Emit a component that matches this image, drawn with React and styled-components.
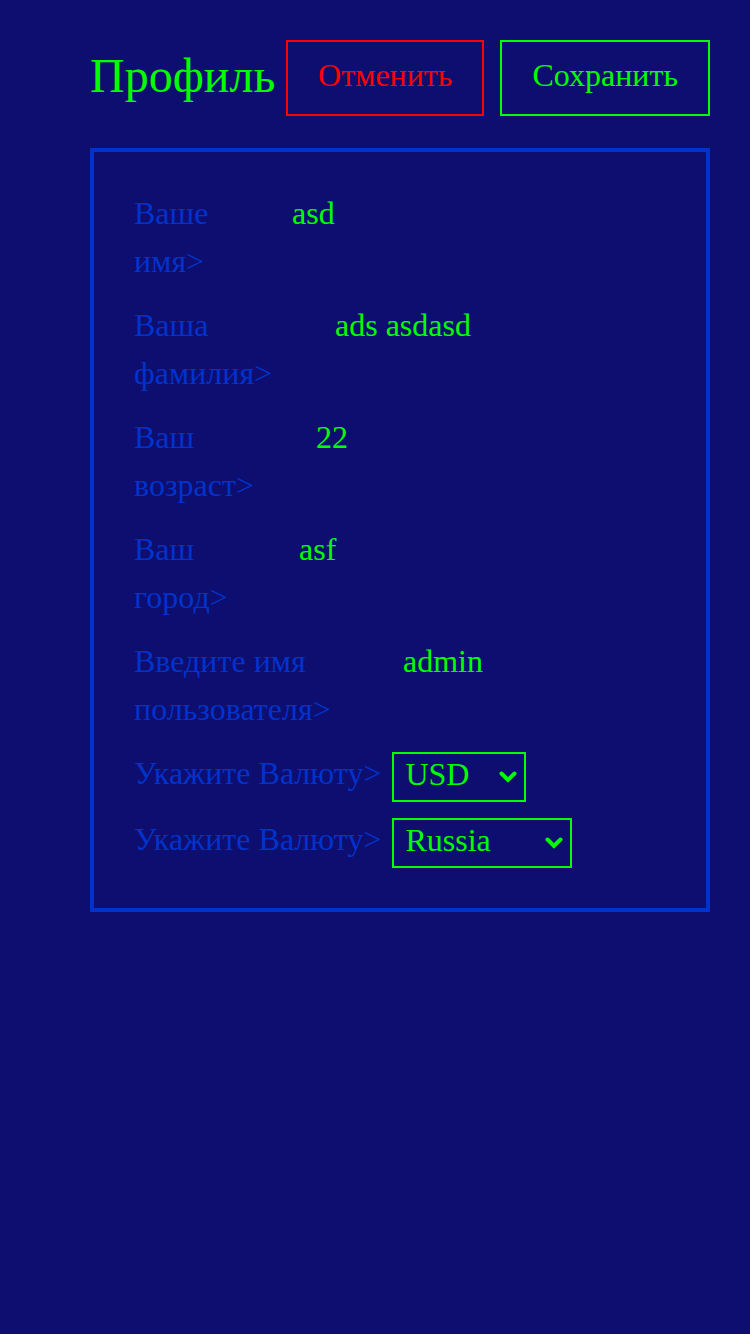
import styled, { createGlobalStyle } from 'styled-components';

const GlobalStyle = createGlobalStyle`
  html, body {
    margin: 0;
    padding: 0;
    background: #0d0e6f;
  }
  body {
    font-family: "Liberation Serif", "Times New Roman", serif;
    min-height: 1334px;
  }
`;

const Page = styled.div`
  padding: 40px 40px 0 90px;
`;

const Header = styled.header`
  display: flex;
  align-items: center;
  justify-content: space-between;
`;

const Title = styled.h1`
  margin: 0 0 6px 0;
  font-size: 48px;
  font-weight: normal;
  color: #00ff00;
`;

const Buttons = styled.div`
  display: flex;
  gap: 16px;
`;

const Button = styled.button`
  font-family: inherit;
  font-size: 32px;
  line-height: 36px;
  padding: 15px 30px 21px;
  background: transparent;
  color: ${p => p.$color};
  border: 2px solid ${p => p.$color};
  cursor: pointer;
`;

const Card = styled.div`
  margin-top: 32px;
  border: 4px solid #0033cc;
  padding: 37px 40px 40px 40px;
  display: flex;
  flex-direction: column;
`;

const Row = styled.div`
  display: grid;
  grid-template-columns: ${p => p.$labelCol}px 1fr;
  font-size: 32px;
  line-height: 48px;
  margin-bottom: 16px;
`;

const Label = styled.span`
  color: #0033cc;
  width: min-content;
`;

const Value = styled.span`
  color: #00ff00;
`;

const SelectRow = styled.div`
  display: flex;
  align-items: flex-start;
  gap: 11px;
  font-size: 32px;
  line-height: 48px;
  margin-bottom: ${p => (p.$last ? 0 : 13)}px;
`;

const SelectLabel = styled.span`
  color: #0033cc;
  white-space: nowrap;
`;

const SelectBox = styled.span`
  position: relative;
  display: inline-flex;
  margin-top: 3px;
`;

const Select = styled.select`
  appearance: none;
  box-sizing: border-box;
  width: ${p => p.$width}px;
  height: 50px;
  font-family: inherit;
  font-size: 32px;
  color: #00ff00;
  background: transparent;
  border: 2px solid #00ff00;
  border-radius: 0;
  padding: 0 30px 6px 11px;
  outline: none;

  option {
    background: #0d0e6f;
  }
`;

const Chevron = styled.svg`
  position: absolute;
  right: 9px;
  top: 19px;
  pointer-events: none;
`;

function ChevronIcon() {
  return (
    <Chevron width="18" height="12" viewBox="0 0 18 12">
      <polyline points="2.5,2.5 9,9 15.5,2.5" fill="none" stroke="#00ff00" strokeWidth="4" strokeLinecap="round" strokeLinejoin="miter" />
    </Chevron>
  );
}

const fields = [
  { label: 'Ваше имя>', value: 'asd', col: 158 },
  { label: 'Ваша фамилия>', value: 'ads asdasd', col: 201 },
  { label: 'Ваш возраст>', value: '22', col: 182 },
  { label: 'Ваш город>', value: 'asf', col: 165 },
  { label: 'Введите имя пользователя>', value: 'admin', col: 269 },
];

function App() {
  return (
    <>
      <GlobalStyle />
      <Page>
        <Header>
          <Title>Профиль</Title>
          <Buttons>
            <Button $color="#ff0000">Отменить</Button>
            <Button $color="#00ff00">Сохранить</Button>
          </Buttons>
        </Header>
        <Card>
          {fields.map(f => (
            <Row key={f.label} $labelCol={f.col}>
              <Label>{f.label}</Label>
              <Value>{f.value}</Value>
            </Row>
          ))}
          <SelectRow>
            <SelectLabel>Укажите Валюту&gt;</SelectLabel>
            <SelectBox>
              <Select $width={134} defaultValue="USD">
                <option>USD</option>
                <option>EUR</option>
                <option>RUB</option>
              </Select>
              <ChevronIcon />
            </SelectBox>
          </SelectRow>
          <SelectRow $last>
            <SelectLabel>Укажите Валюту&gt;</SelectLabel>
            <SelectBox>
              <Select $width={180} defaultValue="Russia">
                <option>Russia</option>
                <option>USA</option>
              </Select>
              <ChevronIcon />
            </SelectBox>
          </SelectRow>
        </Card>
      </Page>
    </>
  );
}

export default App;
